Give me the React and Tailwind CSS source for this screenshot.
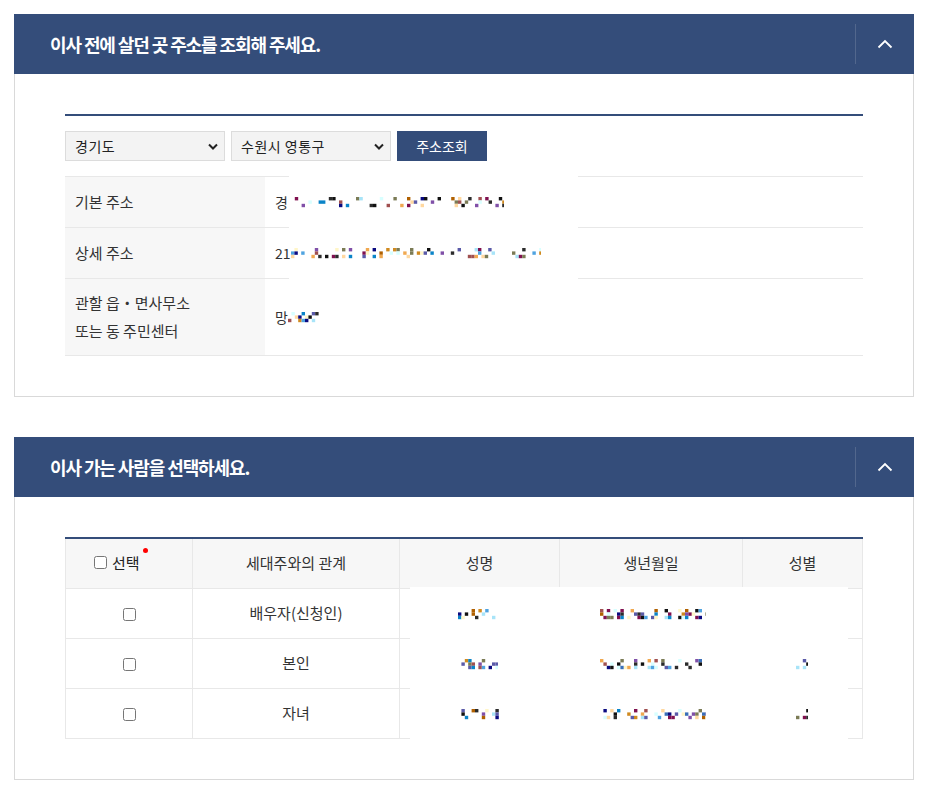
const FONT = { fontFamily: '"Noto Sans CJK KR", "Noto Sans", sans-serif' }

const PALETTE = [
  '#4fa3e0', '#111111', '#7b7b55', '#8050a8', '#fff6c8', '#f0a850', '#a8e4f8',
  '#5a5aa8', '#0a0a80', '#80104f', '#d8ffff', '#a05050', '#b06000', '#0a84c8',
  '#ffd8a0', '#2b2b2b', '#d08a20', '#3a6fb8',
]

function rng(seed) {
  return () => {
    seed = (seed + 0x6d2b79f5) | 0
    let t = Math.imul(seed ^ (seed >>> 15), 1 | seed)
    t = (t + Math.imul(t ^ (t >>> 7), 61 | t)) ^ t
    return ((t ^ (t >>> 14)) >>> 0) / 4294967296
  }
}

// masked personal data, drawn as scattered pixels
function Noise({ w, seed, density = 0.25 }) {
  const r = rng(seed)
  const rects = []
  for (let x = 0; x < w; x += 3.4) {
    for (let y = 0; y < 3; y++) {
      if (r() < density) {
        rects.push(
          <rect key={`${x}-${y}`} x={x} y={y * 3.4} width={3.4} height={3.4} fill={PALETTE[Math.floor(r() * PALETTE.length)]} />
        )
      }
    }
  }
  return (
    <svg width={w} height={11} className="inline-block align-middle">
      {rects}
    </svg>
  )
}

function PanelHeader({ title }) {
  return (
    <div className="flex h-[60px] items-center bg-[#344d7a]">
      <h2 className="pl-[36px] text-[18px] font-bold tracking-[-1.1px] text-white">{title}</h2>
      <div className="ml-auto flex h-[40px] w-[59px] items-center justify-center border-l border-white/15">
        <svg width="16" height="10" viewBox="0 0 16 10" fill="none">
          <polyline points="1.5,8.5 8,2 14.5,8.5" stroke="white" strokeWidth="1.8" />
        </svg>
      </div>
    </div>
  )
}

function Select({ value }) {
  return (
    <div className="relative h-[30px] w-[160px] border border-[#dcdcdc] bg-[#f3f3f3]">
      <span className="absolute left-[9px] top-[4px] text-[14px] tracking-[0.5px] text-[#222]">{value}</span>
      <svg className="absolute right-[6px] top-[11px]" width="10" height="7" viewBox="0 0 10 7" fill="none">
        <polyline points="1,1.5 5,5.5 9,1.5" stroke="#222" strokeWidth="2" />
      </svg>
    </div>
  )
}

function AddressSection() {
  return (
    <section>
      <PanelHeader title="이사 전에 살던 곳 주소를 조회해 주세요." />
      <div className="border border-t-0 border-[#d9d9d9] px-[50px] pb-[40px] pt-[40px]">
        <div className="h-[2px] bg-[#344d7a]" />
        <div className="mt-[15px] flex gap-[6px]">
          <Select value="경기도" />
          <Select value="수원시 영통구" />
          <button className="h-[30px] w-[90px] bg-[#344d7a] text-[14px] text-white">주소조회</button>
        </div>
        <div className="relative mt-[15px] border-t border-[#e8e8e8] text-[15px] text-[#333]">
          <div className="grid grid-cols-[200px_1fr] border-b border-[#e8e8e8]">
            <div className="flex h-[50px] items-center bg-[#f7f7f7] pl-[10px]">기본 주소</div>
            <div className="relative z-10 flex items-center pl-[10px] text-[14px]">
              경<Noise w={216} seed={11} />
            </div>
          </div>
          <div className="grid grid-cols-[200px_1fr] border-b border-[#e8e8e8]">
            <div className="flex h-[50px] items-center bg-[#f7f7f7] pl-[10px]">상세 주소</div>
            <div className="relative z-10 flex items-center pl-[10px] text-[14px]">
              21<Noise w={250} seed={27} />
            </div>
          </div>
          <div className="grid grid-cols-[200px_1fr] border-b border-[#e8e8e8]">
            <div className="flex h-[76px] flex-col justify-center bg-[#f7f7f7] pl-[10px] leading-[28px]">
              <span>관할 읍・면사무소</span>
              <span>또는 동 주민센터</span>
            </div>
            <div className="flex items-center pl-[10px] text-[14px]">
              망<Noise w={32} seed={5} density={0.45} />
            </div>
          </div>
          <div className="absolute left-[224px] top-[-1px] h-[103px] w-[289px] bg-white" />
        </div>
      </div>
    </section>
  )
}

const PEOPLE = [
  { rel: '배우자(신청인)', seeds: [3, 8, 0], widths: [42, 106, 0] },
  { rel: '본인', seeds: [14, 19, 21], widths: [40, 108, 12] },
  { rel: '자녀', seeds: [31, 33, 36], widths: [42, 106, 12] },
]

function MoverSection() {
  const th = 'h-[50px] border-r border-[#e8e8e8] bg-[#f7f7f7] text-center font-normal last:border-r-0'
  const td = 'h-[50px] border-r border-t border-[#e8e8e8] text-center last:border-r-0'
  return (
    <section className="mt-[40px]">
      <PanelHeader title="이사 가는 사람을 선택하세요." />
      <div className="border border-t-0 border-[#d9d9d9] px-[50px] pb-[40px] pt-[40px]">
        <div className="relative">
          <table className="w-[797px] table-fixed border-collapse border-x border-b border-t-2 border-x-[#e8e8e8] border-b-[#e8e8e8] border-t-[#344d7a] text-[15px] text-[#333]">
            <colgroup>
              <col className="w-[127px]" />
              <col className="w-[207px]" />
              <col className="w-[160px]" />
              <col className="w-[183px]" />
              <col className="w-[120px]" />
            </colgroup>
            <thead>
              <tr>
                <th className={`${th} pl-[28px] text-left`}>
                  <span className="relative inline-flex items-center gap-[5px] text-[#222]">
                    <input type="checkbox" className="h-[13px] w-[13px]" />
                    선택
                    <span className="absolute -right-[8px] top-[-4px] h-[5px] w-[5px] rounded-full bg-[#ff0000]" />
                  </span>
                </th>
                <th className={th}>세대주와의 관계</th>
                <th className={th}>성명</th>
                <th className={th}>생년월일</th>
                <th className={th}>성별</th>
              </tr>
            </thead>
            <tbody>
              {PEOPLE.map((p) => (
                <tr key={p.rel}>
                  <td className={td}>
                    <input type="checkbox" className="h-[13px] w-[13px] align-middle" />
                  </td>
                  <td className={td}>{p.rel}</td>
                  <td className={td} />
                  <td className={td} />
                  <td className={td} />
                </tr>
              ))}
            </tbody>
          </table>
          <div className="absolute left-[345px] top-[50px] flex h-[154px] w-[438px] flex-col bg-white">
            {PEOPLE.map((p) => (
              <div key={p.rel} className="flex h-[50px] items-center">
                <div className="w-[150px] pl-[48px]">
                  <Noise w={p.widths[0]} seed={p.seeds[0]} density={0.35} />
                </div>
                <div className="w-[188px] pl-[40px]">
                  <Noise w={p.widths[1]} seed={p.seeds[1]} density={0.4} />
                </div>
                <div className="pl-[48px]">
                  {p.widths[2] > 0 && <Noise w={p.widths[2]} seed={p.seeds[2]} density={0.4} />}
                </div>
              </div>
            ))}
          </div>
        </div>
      </div>
    </section>
  )
}

export default function App() {
  return (
    <div className="min-h-[790px] bg-white pb-[10px] pt-[14px]" style={FONT}>
      <div className="ml-[14px] w-[900px]">
        <AddressSection />
        <MoverSection />
      </div>
    </div>
  )
}
